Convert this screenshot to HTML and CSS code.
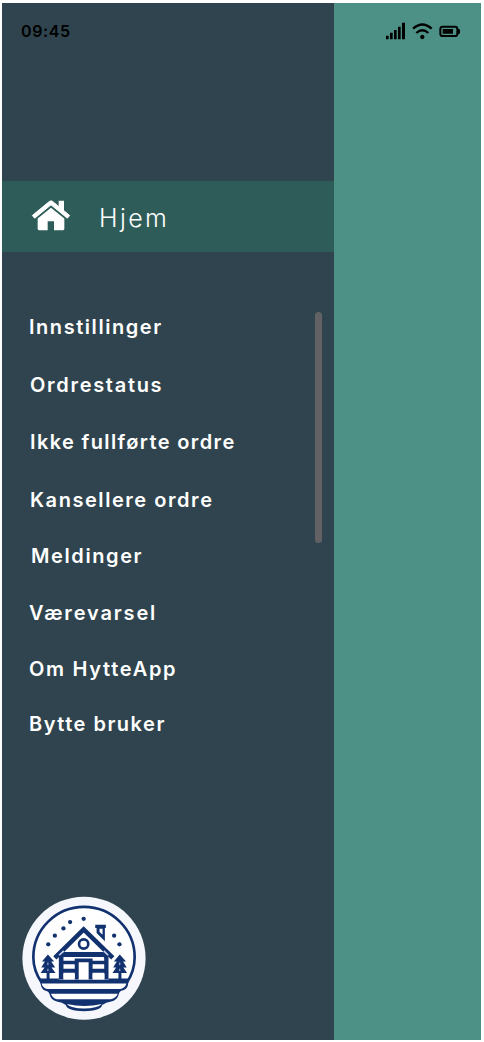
FILE: index.html
```html
<!DOCTYPE html>
<html lang="no">
<head>
<meta charset="utf-8">
<title>HytteApp</title>
<link rel="stylesheet" href="styles.css">
</head>
<body>
<main class="phone">
  <aside class="drawer">
    <div class="clock">09:45</div>
    <a class="home">
      <svg class="home-icon" viewBox="0 0 120 92">
        <path d="M4 46 L55 4 Q60 0 65 4 L116 46 L109 54 L60 14 L11 54 Z" stroke-width="3" stroke-linejoin="round" stroke="#fff"/>
        <path d="M83 2H99V34L83 22ZM20 55L60 23 100 55V86Q100 90 96 90H69V63H50V90H24Q20 90 20 86Z"/>
      </svg>
      <span class="home-label">Hjem</span>
    </a>
    <div class="menu-area">
      <nav class="menu">
        <a class="item innstillinger">Innstillinger</a>
        <a class="item ordrestatus">Ordrestatus</a>
        <a class="item ikke">Ikke fullførte ordre</a>
        <a class="item kansellere">Kansellere ordre</a>
        <a class="item meldinger">Meldinger</a>
        <a class="item vaer">Værevarsel</a>
        <a class="item om">Om HytteApp</a>
        <a class="item bytte">Bytte bruker</a>
      </nav>
      <div class="scrollbar"></div>
    </div>
    <svg class="logo" viewBox="0 0 420 450">
      <circle cx="210" cy="203" r="186" fill="#f6f7fd"/>
      <path d="M82 276Q57 240 57 200A153 152 0 0 1 363 200Q363 240 340 276Z" fill="#fff" stroke="#11316f" stroke-width="8"/>
      <path d="M76 264H346L342 287Q337 300 322 301Q316 304 314 315Q309 330 292 334Q276 337 265 344Q260 362 210 363Q160 362 155 344Q145 336 128 334Q110 330 106 312Q104 303 94 301Q81 298 79 280Z" fill="#11316f"/>
      <g fill="#fff">
        <path d="M82 279H338Q335 292 320 296H98Q85 292 82 279Z"/>
        <path d="M110 310H312Q307 323 291 327H128Q114 322 110 310Z"/>
        <path d="M158 341Q184 347 211 347Q238 347 264 341Q250 354 210 355Q170 354 158 341Z"/>
      </g>
      <path d="M134 190L209 120 284 190V268H134Z" fill="#fff"/>
      <g fill="#11316f">
        <circle cx="209" cy="84" r="6.5"/><circle cx="168" cy="94" r="6.5"/><circle cx="148" cy="113" r="6.5"/><circle cx="122" cy="135" r="6.5"/><circle cx="102" cy="161" r="6.5"/><circle cx="301" cy="135" r="6.5"/><circle cx="317" cy="161" r="6.5"/>
        <path d="M244 102H276V112H273V152L248 127V112H244Z"/>
        <path d="M134 193L150 184H268L284 193V267H272V249H236V267H224V215H194V267H182V249H148V267H134Z"/>
        <path d="M101 192L120 213H111L123 231H112L124 248H106V267H97V248H79L91 231H81L92 213H83Z"/>
        <path d="M318 192L337 213H328L339 231H329L340 248H323V267H314V248H296L307 231H298L309 213H300Z"/>
      </g>
      <path d="M257 114H266V132L257 124ZM148 199H270V204H236H182V211H148ZM236 203H271V211H236ZM148 221H182V235H148ZM236 221H271V235H236ZM148 247H182V264H148ZM236 247H271V264H236Z" fill="#fff"/>
      <path d="M122 202L209 116 297 202" fill="none" stroke="#11316f" stroke-width="14"/>
      <path d="M135 194L149 181M270 181L283 194" stroke="#c8d5ef" stroke-width="5"/>
      <circle cx="209" cy="160" r="14" fill="#fff" stroke="#11316f" stroke-width="8"/>
      <path d="M101 216V224M101 235V242M318 216V224M318 235V242" stroke="#b5c3df" stroke-width="3"/>
    </svg>
  </aside>
  <section class="page">
    <svg class="status" viewBox="0 0 222 54">
      <path d="M0 41h8v11H0zM12 32h8v20h-8zM24 24h8v28h-8zM36 14h8v38h-8zM48 2h9v50h-9z"/>
      <path d="M81 20Q109-5 137 20M91 33Q109 17 127 33" fill="none" stroke="#000" stroke-width="7"/>
      <circle cx="109" cy="45" r="6.5"/>
      <rect x="163" y="14" width="51" height="28" rx="7" fill="none" stroke="#000" stroke-width="6"/>
      <path d="M170 21h31v14h-31zM216 20q6 1 6 5v7q0 4-6 5z"/>
    </svg>
  </section>
</main>
</body>
</html>
```
FILE: styles.css
```css
* { box-sizing: border-box; }
body {
  margin: 0;
  padding: 3px 3px 0 2px;
  background: #fff;
  color: #fff;
  font-family: Inter, "Open Sans", sans-serif;
}
.phone {
  display: flex;
  width: 479px;
  height: 1037px;
  background: #4d9186;
}
.drawer {
  display: flex;
  flex-direction: column;
  width: 332px;
  background: #2f444e;
}
.clock {
  height: 178px;
  padding: 18px 0 0 19px;
  color: #000;
  font-size: 16px;
  font-weight: 600;
  line-height: 20px;
  letter-spacing: 0.6px;
}
.home {
  display: flex;
  align-items: flex-start;
  height: 71px;
  padding: 19px 0 0 29px;
  background: #2e5d59;
}
.home-icon {
  width: 40px;
  height: 31px;
  fill: #fff;
}
.home-label {
  margin: 3px 0 0 28px;
  font-size: 25px;
  font-weight: 300;
  line-height: 30px;
  letter-spacing: 2.4px;
}
.menu-area {
  display: flex;
  justify-content: space-between;
  height: 639px;
  padding: 60px 12px 0 27px;
}
.menu {
  display: flex;
  flex-direction: column;
  padding-top: 3px;
}
.item {
  height: 57px;
  font-size: 20px;
  font-weight: 600;
  line-height: 24px;
  white-space: nowrap;
}
.innstillinger { height: 58px; letter-spacing: 1.55px; }
.ordrestatus { padding-left: 1px; letter-spacing: 1.7px; }
.ikke { height: 58px; padding-left: 1px; letter-spacing: 1.37px; }
.kansellere { height: 56px; padding-left: 1px; letter-spacing: 1.55px; }
.meldinger { padding-left: 2px; letter-spacing: 1.6px; }
.vaer { height: 56px; letter-spacing: 1.85px; }
.om { height: 55px; letter-spacing: 1.7px; }
.bytte { letter-spacing: 1.5px; }
.scrollbar {
  width: 7px;
  height: 231px;
  border-radius: 4px;
  background: #626265;
}
.logo {
  flex: none;
  width: 140px;
  height: 149px;
  margin-left: 12px;
}
.page {
  display: flex;
  flex: 1;
  justify-content: flex-end;
  padding: 19px 21px 0 0;
}
.status {
  width: 74px;
  height: 18px;
}
```
